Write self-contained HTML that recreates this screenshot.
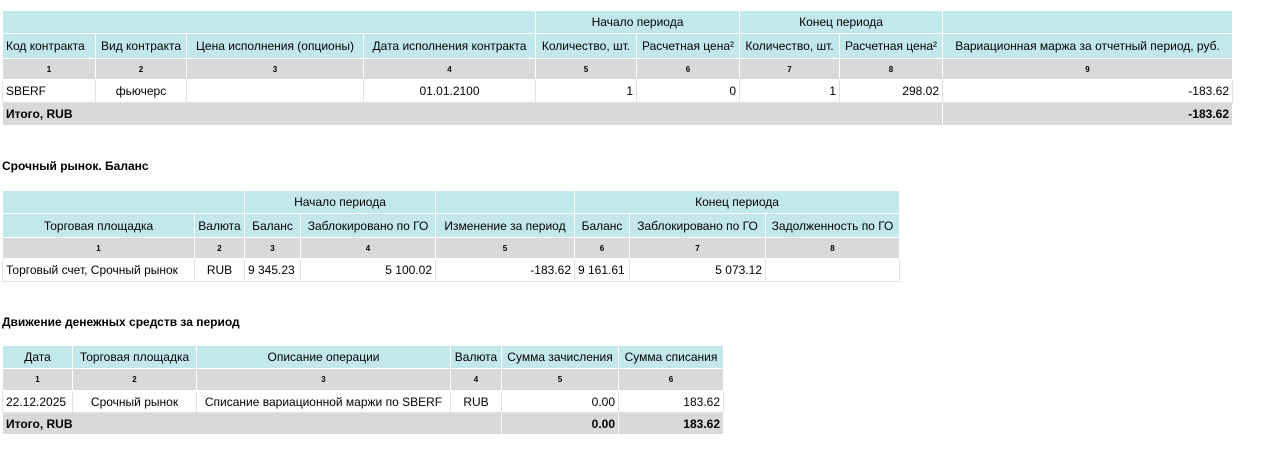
<!DOCTYPE html>
<html><head><meta charset="utf-8"><style>
body{margin:0;width:1276px;height:469px;background:#fff;font-family:"Liberation Sans Narrow","Liberation Sans",sans-serif;font-size:12px;color:#000;position:relative;overflow:hidden}
table{position:absolute;border-collapse:collapse;table-layout:fixed}
td{padding:0 3px;white-space:nowrap;overflow:hidden;border:1px solid #e2e2e2;text-align:center}
.h td{background:#c3e8ec;border:1px solid #fff}
.n td{background:#d9d9d9;border:1px solid #fff;font-size:8px;font-weight:bold;font-family:"Liberation Sans",sans-serif}
.t td{background:#d9d9d9;border:1px solid #fff;font-weight:bold}
.r{text-align:right}.l{text-align:left}
.ttl{position:absolute;left:2px;font-weight:bold;font-size:12px}
</style></head><body>
<table style="left:2px;top:10px;width:1230px">
<colgroup><col style="width:93px"><col style="width:91px"><col style="width:177px"><col style="width:172px"><col style="width:101px"><col style="width:103px"><col style="width:100px"><col style="width:103px"><col style="width:290px"></colgroup>
<tr class="h" style="height:23px"><td colspan="4"></td><td colspan="2">Начало периода</td><td colspan="2">Конец периода</td><td></td></tr>
<tr class="h" style="height:25px"><td class="l">Код контракта</td><td>Вид контракта</td><td>Цена исполнения (опционы)</td><td>Дата исполнения контракта</td><td>Количество, шт.</td><td>Расчетная цена²</td><td>Количество, шт.</td><td>Расчетная цена²</td><td>Вариационная маржа за отчетный период, руб.</td></tr>
<tr class="n" style="height:21px"><td>1</td><td>2</td><td>3</td><td>4</td><td>5</td><td>6</td><td>7</td><td>8</td><td>9</td></tr>
<tr style="height:23px"><td class="l">SBERF</td><td>фьючерс</td><td></td><td>01.01.2100</td><td class="r">1</td><td class="r">0</td><td class="r">1</td><td class="r">298.02</td><td class="r">-183.62</td></tr>
<tr class="t" style="height:23px"><td colspan="8" class="l">Итого, RUB</td><td class="r">-183.62</td></tr>
</table>
<div class="ttl" style="top:159px">Срочный рынок. Баланс</div>
<table style="left:2px;top:190px;width:897px">
<colgroup><col style="width:192px"><col style="width:50px"><col style="width:56px"><col style="width:135px"><col style="width:139px"><col style="width:55px"><col style="width:136px"><col style="width:134px"></colgroup>
<tr class="h" style="height:23px"><td colspan="2"></td><td colspan="2">Начало периода</td><td></td><td colspan="3">Конец периода</td></tr>
<tr class="h" style="height:24px"><td>Торговая площадка</td><td>Валюта</td><td>Баланс</td><td>Заблокировано по ГО</td><td>Изменение за период</td><td>Баланс</td><td>Заблокировано по ГО</td><td>Задолженность по ГО</td></tr>
<tr class="n" style="height:21px"><td>1</td><td>2</td><td>3</td><td>4</td><td>5</td><td>6</td><td>7</td><td>8</td></tr>
<tr style="height:23px"><td class="l">Торговый счет, Срочный рынок</td><td>RUB</td><td class="l">9 345.23</td><td class="r">5 100.02</td><td class="r">-183.62</td><td class="l">9 161.61</td><td class="r">5 073.12</td><td></td></tr>
</table>
<div class="ttl" style="top:315px">Движение денежных средств за период</div>
<table style="left:2px;top:345px;width:721px">
<colgroup><col style="width:70px"><col style="width:124px"><col style="width:254px"><col style="width:51px"><col style="width:117px"><col style="width:105px"></colgroup>
<tr class="h" style="height:23px"><td>Дата</td><td>Торговая площадка</td><td>Описание операции</td><td>Валюта</td><td>Сумма зачисления</td><td>Сумма списания</td></tr>
<tr class="n" style="height:22px"><td>1</td><td>2</td><td>3</td><td>4</td><td>5</td><td>6</td></tr>
<tr style="height:22px"><td class="l">22.12.2025</td><td>Срочный рынок</td><td>Списание вариационной маржи по SBERF</td><td>RUB</td><td class="r">0.00</td><td class="r">183.62</td></tr>
<tr class="t" style="height:22px"><td colspan="4" class="l">Итого, RUB</td><td class="r">0.00</td><td class="r">183.62</td></tr>
</table>
</body></html>
